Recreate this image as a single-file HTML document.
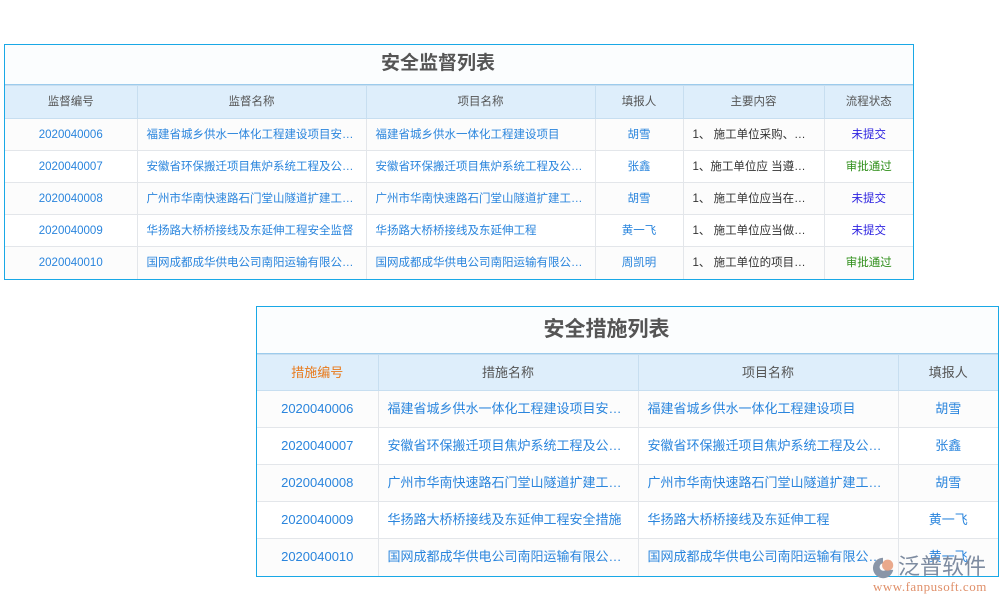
<!DOCTYPE html>
<html><head><meta charset="utf-8"><style>
*{margin:0;padding:0;box-sizing:border-box}
body{width:1000px;height:600px;background:#fff;position:relative;overflow:hidden;font-family:"Liberation Sans","Noto Sans CJK SC",sans-serif}
.t{position:absolute;border:1px solid #19a8e6;background:#fff}
.ttl{background:#fbfdfe;text-align:center;font-weight:bold;color:#555;border-bottom:1px solid #9ccbec;padding-right:42px}
table{border-collapse:collapse;table-layout:fixed;width:100%}
td,th{border:1px solid #e3e6ea;text-align:center;white-space:nowrap;overflow:hidden;font-weight:normal;color:#2a85dd;padding:0;line-height:14px;vertical-align:middle}
th{background:#deeefb;color:#555;border-color:#c7def0}
tr td:first-child,tr th:first-child{border-left:none}
tr td:last-child,tr th:last-child{border-right:none}
tr:last-child td{border-bottom:none}
tr:nth-child(odd) td{background:#fff}
tr:nth-child(even) td{background:#fcfcfc}
.l{text-align:left;padding-left:9px}
.k{color:#333}
.u{color:#2a1fe0}
.g{color:#2f8f1a}
#a td,#a th{font-size:11.5px}
#b td,#b th{font-size:13px}
</style></head><body>
<div class="t" id="a" style="left:4px;top:44px;width:910px">
<div class="ttl" style="height:40px;line-height:38px;font-size:19px">安全监督列表</div>
<table>
<colgroup><col style="width:132px"><col style="width:229px"><col style="width:229px"><col style="width:88px"><col style="width:141px"><col></colgroup>
<tr style="height:33px"><th>监督编号</th><th>监督名称</th><th>项目名称</th><th>填报人</th><th>主要内容</th><th>流程状态</th></tr>
<tr style="height:32px"><td>2020040006</td><td class="l">福建省城乡供水一体化工程建设项目安…</td><td class="l">福建省城乡供水一体化工程建设项目</td><td>胡雪</td><td class="l k">1、 施工单位采购、…</td><td class="u">未提交</td></tr>
<tr style="height:32px"><td>2020040007</td><td class="l">安徽省环保搬迁项目焦炉系统工程及公…</td><td class="l">安徽省环保搬迁项目焦炉系统工程及公…</td><td>张鑫</td><td class="l k">1、施工单位应 当遵…</td><td class="g">审批通过</td></tr>
<tr style="height:32px"><td>2020040008</td><td class="l">广州市华南快速路石门堂山隧道扩建工…</td><td class="l">广州市华南快速路石门堂山隧道扩建工…</td><td>胡雪</td><td class="l k">1、 施工单位应当在…</td><td class="u">未提交</td></tr>
<tr style="height:32px"><td>2020040009</td><td class="l">华扬路大桥桥接线及东延伸工程安全监督</td><td class="l">华扬路大桥桥接线及东延伸工程</td><td>黄一飞</td><td class="l k">1、 施工单位应当做…</td><td class="u">未提交</td></tr>
<tr style="height:32px"><td>2020040010</td><td class="l">国网成都成华供电公司南阳运输有限公…</td><td class="l">国网成都成华供电公司南阳运输有限公…</td><td>周凯明</td><td class="l k">1、 施工单位的项目…</td><td class="g">审批通过</td></tr>
</table></div>

<div class="t" id="b" style="left:256px;top:306px;width:743px">
<div class="ttl" style="height:47px;line-height:45px;font-size:21px">安全措施列表</div>
<table>
<colgroup><col style="width:121px"><col style="width:260px"><col style="width:260px"><col></colgroup>
<tr style="height:36px"><th style="color:#e87a1c">措施编号</th><th>措施名称</th><th>项目名称</th><th>填报人</th></tr>
<tr style="height:37px"><td>2020040006</td><td class="l">福建省城乡供水一体化工程建设项目安…</td><td class="l">福建省城乡供水一体化工程建设项目</td><td>胡雪</td></tr>
<tr style="height:37px"><td>2020040007</td><td class="l">安徽省环保搬迁项目焦炉系统工程及公…</td><td class="l">安徽省环保搬迁项目焦炉系统工程及公…</td><td>张鑫</td></tr>
<tr style="height:37px"><td>2020040008</td><td class="l">广州市华南快速路石门堂山隧道扩建工…</td><td class="l">广州市华南快速路石门堂山隧道扩建工…</td><td>胡雪</td></tr>
<tr style="height:37px"><td>2020040009</td><td class="l">华扬路大桥桥接线及东延伸工程安全措施</td><td class="l">华扬路大桥桥接线及东延伸工程</td><td style="color:#2a85dd">黄一飞</td></tr>
<tr style="height:37px"><td>2020040010</td><td class="l">国网成都成华供电公司南阳运输有限公…</td><td class="l">国网成都成华供电公司南阳运输有限公…</td><td style="color:#2a85dd">黄一飞</td></tr>
</table></div>

<svg style="position:absolute;left:870px;top:555px" width="26" height="26" viewBox="0 0 28 28">
<path d="M14 3 A11 11 0 1 0 25 16 L17 16 A4 4 0 1 1 14 9 Z" fill="#8a96a8"/>
<circle cx="19" cy="11" r="6" fill="#e8a080" opacity="0.9"/>
</svg>
<div style="position:absolute;left:898px;top:552px;font-size:22px;line-height:26px;white-space:nowrap;color:#7d8ba0;font-family:'Noto Sans CJK SC',sans-serif">泛普软件</div>
<div style="position:absolute;left:873px;top:579px;font-size:13px;line-height:15px;white-space:nowrap;color:#e0906a;font-family:'Liberation Serif',serif;letter-spacing:0.5px">www.fanpusoft.com</div>
</body></html>
